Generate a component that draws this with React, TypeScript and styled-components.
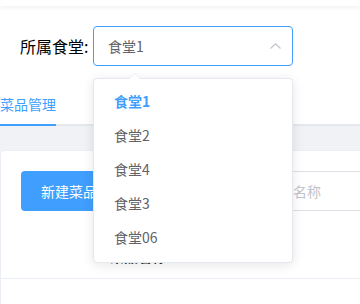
import React from "react";
import styled, { createGlobalStyle } from "styled-components";

const GlobalStyle = createGlobalStyle`
  html, body {
    margin: 0;
    padding: 0;
    background: #ffffff;
    overflow: hidden;
  }
  body {
    font-family: "Noto Sans CJK SC", "Noto Sans", "Liberation Sans", sans-serif;
  }
  * { box-sizing: border-box; }
`;

const Page = styled.div`
  width: 360px;
  height: 304px;
  overflow: hidden;
  position: relative;
  background: #fff;
`;

const TopBar = styled.div`
  height: 6px;
  background: #fff;
  box-shadow: 0 1px 5px rgba(0, 21, 41, 0.08);
  position: relative;
  z-index: 1;
`;

const FilterRow = styled.div`
  display: flex;
  align-items: center;
  padding: 20px 0 0 20px;
`;

const Label = styled.span`
  font-size: 16px;
  color: #000;
  width: 73px;
  line-height: 40px;
  white-space: nowrap;
`;

const SelectWrap = styled.div`
  position: relative;
  width: 200px;
`;

const SelectBox = styled.div`
  height: 40px;
  border: 1px solid #409eff;
  border-radius: 4px;
  display: flex;
  align-items: center;
  justify-content: space-between;
  padding: 0 11px 0 14px;
  font-size: 14px;
  color: #606266;
`;

const Dropdown = styled.div`
  position: absolute;
  top: calc(100% + 12px);
  left: 0;
  width: 200px;
  background: #fff;
  border: 1px solid #e4e7ed;
  border-radius: 4px;
  box-shadow: 0 2px 12px rgba(0, 0, 0, 0.1);
  padding: 5px 0 8px;
  z-index: 10;
`;

const Arrow = styled.div`
  position: absolute;
  top: -6px;
  left: 35px;
  width: 0;
  height: 0;
  border-left: 6px solid transparent;
  border-right: 6px solid transparent;
  border-bottom: 6px solid #ebeef5;
  &::after {
    content: "";
    position: absolute;
    left: -5px;
    top: 1px;
    border-left: 5px solid transparent;
    border-right: 5px solid transparent;
    border-bottom: 5px solid #fff;
  }
`;

const Option = styled.div<{ $active?: boolean }>`
  height: 34px;
  line-height: 34px;
  padding: 0 20px;
  font-size: 14px;
  color: ${(p) => (p.$active ? "#409eff" : "#606266")};
  font-weight: ${(p) => (p.$active ? 700 : 400)};
  white-space: nowrap;
`;

const Tabs = styled.div`
  margin-top: 18px;
  height: 42px;
  border-bottom: 2px solid #e4e7ed;
  display: flex;
`;

const TabItem = styled.div<{ $active?: boolean }>`
  height: 42px;
  line-height: 40px;
  font-size: 14px;
  color: ${(p) => (p.$active ? "#409eff" : "#303133")};
  border-bottom: 2px solid ${(p) => (p.$active ? "#409eff" : "transparent")};
  margin-bottom: -2px;
  width: 56px;
  white-space: nowrap;
`;

const GrayArea = styled.div`
  background: #f0f2f5;
  padding-top: 24px;
`;

const Card = styled.div`
  background: #fff;
  border: 1px solid #ebeef5;
  border-radius: 4px;
  padding: 20px 0 0 20px;
  width: 420px;
  height: 200px;
`;

const Toolbar = styled.div`
  display: flex;
  align-items: center;
`;

const PrimaryButton = styled.button`
  height: 40px;
  padding: 0 20px;
  border: none;
  border-radius: 4px;
  background: #409eff;
  color: #fff;
  font-size: 14px;
  font-family: inherit;
  white-space: nowrap;
`;

const Input = styled.div`
  margin-left: 90px;
  height: 40px;
  width: 220px;
  border: 1px solid #dcdfe6;
  border-radius: 4px;
  padding: 0 15px;
  display: flex;
  align-items: center;
  font-size: 14px;
  color: #c0c4cc;
  white-space: nowrap;
`;

const TableHead = styled.div`
  margin-top: 20px;
  margin-left: -21px;
  height: 48px;
  border-bottom: 1px solid #ebeef5;
  display: flex;
  align-items: center;
`;

const HeadCell = styled.div<{ $w: number }>`
  width: ${(p) => p.$w}px;
  padding: 3px 0 0 10px;
  font-size: 14px;
  font-weight: 700;
  color: #303133;
  white-space: nowrap;
`;

const options = ["食堂1", "食堂2", "食堂4", "食堂3", "食堂06"];

export default function App() {
  return (
    <Page>
      <GlobalStyle />
      <TopBar />
      <FilterRow>
        <Label>所属食堂:</Label>
        <SelectWrap>
          <SelectBox>
            <span>食堂1</span>
            <svg width="11" height="6" viewBox="0 0 11 6">
              <polyline
                points="0.5,5.5 5.5,0.8 10.5,5.5"
                fill="none"
                stroke="#c0c4cc"
                strokeWidth="1.2"
              />
            </svg>
          </SelectBox>
          <Dropdown>
            <Arrow />
            {options.map((o, i) => (
              <Option key={o} $active={i === 0}>
                {o}
              </Option>
            ))}
          </Dropdown>
        </SelectWrap>
      </FilterRow>
      <Tabs>
        <TabItem $active>菜品管理</TabItem>
      </Tabs>
      <GrayArea>
        <Card>
          <Toolbar>
            <PrimaryButton>新建菜品</PrimaryButton>
            <Input>请输入菜品名称</Input>
          </Toolbar>
          <TableHead>
            <HeadCell $w={100} />
            <HeadCell $w={120}>菜品名称</HeadCell>
          </TableHead>
        </Card>
      </GrayArea>
    </Page>
  );
}
